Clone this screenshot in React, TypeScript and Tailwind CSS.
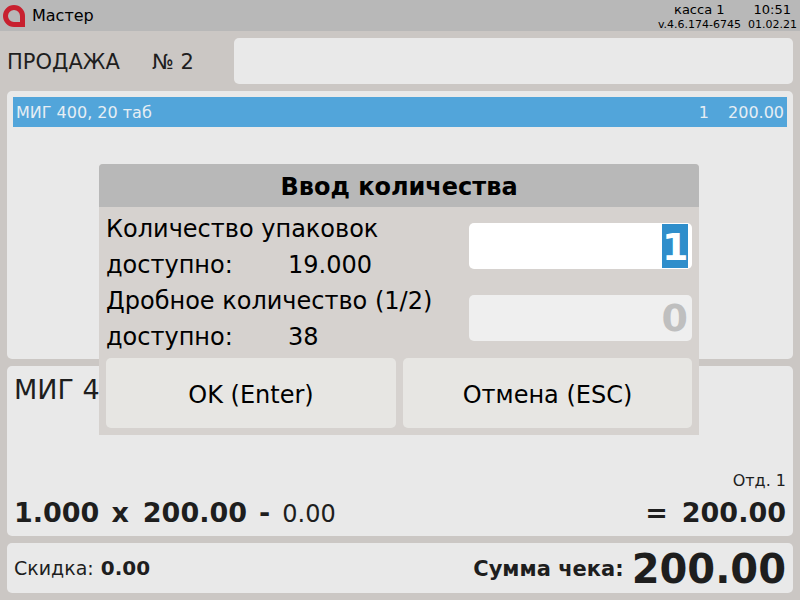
const font = "font-['DejaVu_Sans',sans-serif]";

function Dialog() {
  return (
    <div className="absolute left-[99px] top-[164px] w-[600px] h-[271px] bg-[#d6d2cf] rounded-t-[4px] flex flex-col text-black">
      <div className="h-[43px] shrink-0 bg-[#b8b8b8] rounded-t-[4px] flex items-center justify-center text-[24px] font-bold pt-[2px]">
        Ввод количества
      </div>
      <div className="flex flex-1 px-[7px]">
        <div className="w-[363px] shrink-0 text-[24px] leading-[36px] pt-[4px]">
          <div className="h-[36px]">Количество упаковок</div>
          <div className="h-[36px] flex">
            <span className="w-[182px]">доступно:</span>
            <span>19.000</span>
          </div>
          <div className="h-[36px]">Дробное количество (1/2)</div>
          <div className="h-[36px] flex">
            <span className="w-[182px]">доступно:</span>
            <span>38</span>
          </div>
        </div>
        <div className="flex-1 flex flex-col gap-[26px] pt-[16px]">
          <div className="h-[46px] bg-white rounded-[5px] flex justify-end items-center pr-[4px]">
            <span className="w-[26px] h-[44px] bg-[#2f8ecb] text-white text-[38px] font-bold leading-[46px] text-center">1</span>
          </div>
          <div className="h-[46px] bg-[#efefef] rounded-[5px] flex justify-end items-center pr-[4px]">
            <span className="text-[#bfbfbf] text-[38px] font-bold leading-[46px]">0</span>
          </div>
        </div>
      </div>
      <div className="flex gap-[7px] px-[7px] pb-[7px] text-[24px]">
        <div className="w-[290px] h-[70px] bg-[#e7e6e3] rounded-[5px] flex items-center justify-center pt-[3px]">OK (Enter)</div>
        <div className="w-[289px] h-[70px] bg-[#e7e6e3] rounded-[5px] flex items-center justify-center pt-[3px]">Отмена (ESC)</div>
      </div>
    </div>
  );
}

export default function App() {
  return (
    <div className={`${font} relative w-[800px] h-[600px] overflow-hidden bg-[#cbc7c4] text-[#1e1e1e] flex flex-col`}>
      <div className="h-[31px] shrink-0 bg-[#b8b8b8] flex items-center justify-between pl-[3px] pr-[3px] text-black">
        <div className="flex items-center gap-[7px]">
          <svg width="22" height="22" viewBox="0 0 22 22">
            <path d="M19.5 19.5 H11 A8.5 8.5 0 1 1 19.5 11 Z" fill="none" stroke="#c8202f" strokeWidth="5" />
          </svg>
          <span className="text-[16px]">Мастер</span>
        </div>
        <div className="leading-[15px] pt-[3px]">
          <div className="flex justify-end text-[13px]">
            <span className="mr-[29px]">касса 1</span>
            <span className="mr-[6px]">10:51</span>
          </div>
          <div className="flex gap-[7px] text-[11px]">
            <span>v.4.6.174-6745</span>
            <span>01.02.21</span>
          </div>
        </div>
      </div>

      <div className="flex-1 flex flex-col gap-[7px] px-[7px] pt-[7px] pb-[7px]">
        <div className="h-[46px] shrink-0 flex items-center">
          <span className="w-[145px] text-[21px] pt-[4px]">ПРОДАЖА</span>
          <span className="w-[82px] text-[21px] pt-[4px]">№ 2</span>
          <div className="flex-1 h-full bg-[#e9e9e9] rounded-[5px]" />
        </div>

        <div className="h-[268px] shrink-0 bg-[#e9e9e9] rounded-[5px] p-[6px]">
          <div className="h-[30px] bg-[#52a5da] text-[#e6eef4] text-[16px] flex items-center justify-between pl-[3px] pr-[3px] pt-[2px]">
            <span>МИГ 400, 20 таб</span>
            <span className="flex gap-[19px]">
              <span>1</span>
              <span>200.00</span>
            </span>
          </div>
        </div>

        <div className="h-[170px] shrink-0 bg-[#e9e9e9] rounded-[5px] px-[7px] flex flex-col">
          <div className="text-[27px] leading-[32px] pt-[8px] flex-1">МИГ 400, 20 таб</div>
          <div className="text-right text-[16px] leading-[18px] mb-[-3px]">Отд. 1</div>
          <div className="h-[49px] flex items-center justify-between text-[27px] pt-[4px]">
            <div className="flex items-baseline">
              <span className="font-bold">1.000</span>
              <span className="font-bold ml-[12px]">x</span>
              <span className="font-bold ml-[14px]">200.00</span>
              <span className="font-bold ml-[12px]">-</span>
              <span className="text-[24px] ml-[12px]">0.00</span>
            </div>
            <div className="flex font-bold">
              <span>=</span>
              <span className="ml-[14px]">200.00</span>
            </div>
          </div>
        </div>

        <div className="h-[50px] shrink-0 bg-[#e9e9e9] rounded-[5px] px-[7px] flex items-center justify-between">
          <div className="text-[19px]">
            Скидка: <span className="font-bold text-[20px] ml-[1px]">0.00</span>
          </div>
          <div className="flex items-center font-bold">
            <span className="text-[21px] mr-[8px] pt-[3px]">Сумма чека:</span>
            <span className="text-[40px] leading-[48px] pt-[2px]">200.00</span>
          </div>
        </div>
      </div>

      <Dialog />
    </div>
  );
}
